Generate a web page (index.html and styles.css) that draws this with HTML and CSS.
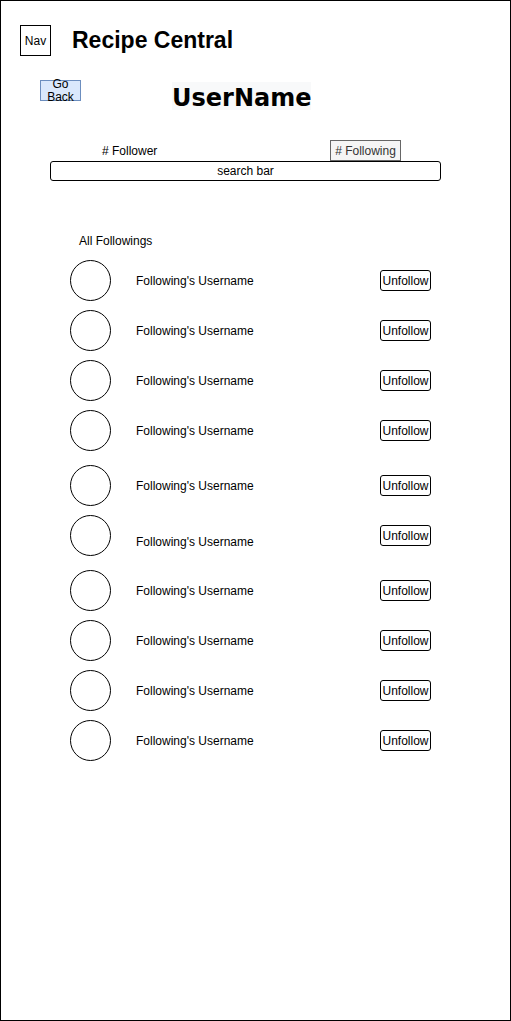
FILE: index.html
```html
<!DOCTYPE html>
<html>
<head>
<meta charset="utf-8">
<title>Recipe Central - Followings</title>
<link rel="stylesheet" href="styles.css">
</head>
<body>
<div class="frame">
  <div class="topbar">
    <div class="nav">Nav</div>
    <div class="title">Recipe Central</div>
  </div>
  <div class="profile">
    <div class="goback">Go Back</div>
    <div class="username">UserName</div>
  </div>
  <div class="stats">
    <span class="follower"># Follower</span>
    <span class="following"># Following</span>
  </div>
  <div class="search">search bar</div>
  <div class="label">All Followings</div>
  <div class="list">
    <div class="row"><div class="avatar"></div><div class="name">Following's Username</div><div class="btn">Unfollow</div></div>
    <div class="row"><div class="avatar"></div><div class="name">Following's Username</div><div class="btn">Unfollow</div></div>
    <div class="row"><div class="avatar"></div><div class="name">Following's Username</div><div class="btn">Unfollow</div></div>
    <div class="row"><div class="avatar"></div><div class="name">Following's Username</div><div class="btn">Unfollow</div></div>
    <div class="row gap"><div class="avatar"></div><div class="name">Following's Username</div><div class="btn">Unfollow</div></div>
    <div class="row"><div class="avatar"></div><div class="name drop">Following's Username</div><div class="btn">Unfollow</div></div>
    <div class="row gap"><div class="avatar"></div><div class="name">Following's Username</div><div class="btn">Unfollow</div></div>
    <div class="row"><div class="avatar"></div><div class="name">Following's Username</div><div class="btn">Unfollow</div></div>
    <div class="row"><div class="avatar"></div><div class="name">Following's Username</div><div class="btn">Unfollow</div></div>
    <div class="row"><div class="avatar"></div><div class="name">Following's Username</div><div class="btn">Unfollow</div></div>
  </div>
</div>
</body>
</html>
```
FILE: styles.css
```css
html, body {
  margin: 0;
  padding: 0;
  background: #fff;
}
body {
  font-family: "Liberation Sans", Arial, Helvetica, sans-serif;
  color: #000;
  font-size: 12px;
}
.frame {
  width: 511px;
  height: 1021px;
  box-sizing: border-box;
  border: 1px solid #000;
  overflow: hidden;
}
.topbar {
  display: flex;
  align-items: center;
  gap: 21px;
  margin: 24px 0 0 19px;
  height: 31px;
}
.nav {
  width: 31px;
  height: 31px;
  box-sizing: border-box;
  border: 1px solid #000;
  display: flex;
  align-items: center;
  justify-content: center;
  font-size: 12px;
}
.title {
  font-size: 23px;
  font-weight: bold;
  line-height: 31px;
}
.profile {
  display: flex;
  align-items: flex-start;
  margin-top: 24px;
  padding-left: 39px;
}
.goback {
  width: 41px;
  height: 21px;
  box-sizing: border-box;
  background: #dae8fc;
  border: 1px solid #6c8ebf;
  font-size: 12px;
  line-height: 13px;
  text-align: center;
  display: flex;
  align-items: center;
  justify-content: center;
}
.username {
  margin: 2px 0 0 91px;
  width: 139px;
  height: 28px;
  box-sizing: border-box;
  padding-top: 2px;
  background: #f8f9fa;
  font-family: "DejaVu Sans", Verdana, sans-serif;
  font-weight: bold;
  font-size: 24px;
  line-height: 28px;
  text-align: center;
  white-space: nowrap;
}
.stats {
  display: flex;
  align-items: center;
  margin-top: 30px;
  padding-left: 101px;
  height: 21px;
}
.follower {
  width: 228px;
  font-size: 12px;
}
.following {
  width: 71px;
  height: 21px;
  box-sizing: border-box;
  border: 1px solid #666;
  background: #f5f5f5;
  color: #333;
  display: flex;
  align-items: center;
  justify-content: center;
  font-size: 12px;
}
.search {
  margin: 0 0 0 49px;
  width: 391px;
  height: 20px;
  box-sizing: border-box;
  border: 1px solid #000;
  border-radius: 3px;
  text-align: center;
  line-height: 18px;
  font-size: 12px;
}
.label {
  margin-top: 53px;
  padding-left: 78px;
  line-height: 14px;
  font-size: 12px;
}
.list {
  margin-top: 7px;
}
.row {
  display: flex;
  align-items: center;
  height: 50px;
  padding-left: 69px;
}
.row.gap {
  margin-top: 5px;
}
.avatar {
  width: 41px;
  height: 41px;
  box-sizing: border-box;
  border: 1px solid #000;
  border-radius: 50%;
  flex: none;
}
.name {
  margin-left: 25px;
  width: 244px;
  font-size: 12px;
  line-height: 14px;
  padding-top: 2px;
}
.name.drop {
  padding-top: 14px;
}
.btn {
  width: 51px;
  height: 21px;
  box-sizing: border-box;
  border: 1px solid #000;
  border-radius: 3px;
  display: flex;
  align-items: center;
  justify-content: center;
  font-size: 12px;
  padding-top: 1px;
}
```
